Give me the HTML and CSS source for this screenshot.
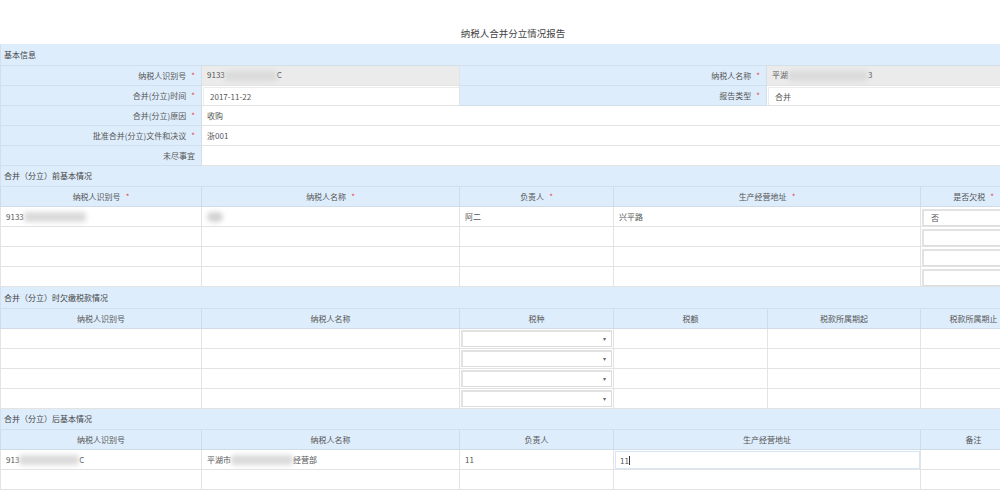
FILE: index.html
```html
<!doctype html>
<html lang="zh-CN">
  <head>
    <meta charset="UTF-8" />
    <title>纳税人合并分立情况报告</title>
    <link rel="stylesheet" href="styles.css">
  </head>
  <body>
    <div class="page">
      <h2 class="title">纳税人合并分立情况报告</h2>

      <!-- 基本信息 -->
      <table class="grid">
        <colgroup>
          <col style="width:201px"><col style="width:258px"><col style="width:307px"><col style="width:260px">
        </colgroup>
        <tr class="sec"><td colspan="4">基本信息</td></tr>
        <tr>
          <td class="lbl">纳税人识别号<i>*</i></td>
          <td class="val disabled">9133<span class="blur" style="width:52px"></span>C</td>
          <td class="lbl">纳税人名称<i>*</i></td>
          <td class="val disabled">平湖<span class="blur" style="width:80px"></span>3</td>
        </tr>
        <tr>
          <td class="lbl">合并(分立)时间<i>*</i></td>
          <td class="val"><div class="box">2017-11-22</div></td>
          <td class="lbl">报告类型<i>*</i></td>
          <td class="val"><div class="box">合并</div></td>
        </tr>
        <tr>
          <td class="lbl">合并(分立)原因<i>*</i></td>
          <td class="val" colspan="3">收购</td>
        </tr>
        <tr>
          <td class="lbl">批准合并(分立)文件和决议<i>*</i></td>
          <td class="val" colspan="3">浙001</td>
        </tr>
        <tr>
          <td class="lbl">未尽事宜</td>
          <td class="val" colspan="3"></td>
        </tr>
      </table>

      <!-- 合并（分立）前基本情况 -->
      <table class="grid">
        <colgroup>
          <col style="width:201px"><col style="width:258px"><col style="width:154px"><col style="width:307px"><col style="width:106px">
        </colgroup>
        <tr class="sec"><td colspan="5">合并（分立）前基本情况</td></tr>
        <tr class="head">
          <td>纳税人识别号<i>*</i></td>
          <td>纳税人名称<i>*</i></td>
          <td>负责人<i>*</i></td>
          <td>生产经营地址<i>*</i></td>
          <td>是否欠税<i>*</i></td>
        </tr>
        <tr>
          <td class="val">9133<span class="blur" style="width:62px"></span></td>
          <td class="val"><span class="blur round" style="width:16px"></span></td>
          <td class="val">阿二</td>
          <td class="val">兴平路</td>
          <td class="val"><div class="inp">否</div></td>
        </tr>
        <tr><td></td><td></td><td></td><td></td><td><div class="inp"></div></td></tr>
        <tr><td></td><td></td><td></td><td></td><td><div class="inp"></div></td></tr>
        <tr><td></td><td></td><td></td><td></td><td><div class="inp"></div></td></tr>
      </table>

      <!-- 合并（分立）时欠缴税款情况 -->
      <table class="grid">
        <colgroup>
          <col style="width:201px"><col style="width:258px"><col style="width:154px"><col style="width:154px"><col style="width:153px"><col style="width:106px">
        </colgroup>
        <tr class="sec"><td colspan="6">合并（分立）时欠缴税款情况</td></tr>
        <tr class="head">
          <td>纳税人识别号</td>
          <td>纳税人名称</td>
          <td>税种</td>
          <td>税额</td>
          <td>税款所属期起</td>
          <td>税款所属期止</td>
        </tr>
        <tr><td></td><td></td><td><div class="inp sel"></div></td><td></td><td></td><td></td></tr>
        <tr><td></td><td></td><td><div class="inp sel"></div></td><td></td><td></td><td></td></tr>
        <tr><td></td><td></td><td><div class="inp sel"></div></td><td></td><td></td><td></td></tr>
        <tr><td></td><td></td><td><div class="inp sel"></div></td><td></td><td></td><td></td></tr>
      </table>

      <!-- 合并（分立）后基本情况 -->
      <table class="grid">
        <colgroup>
          <col style="width:201px"><col style="width:258px"><col style="width:154px"><col style="width:307px"><col style="width:106px">
        </colgroup>
        <tr class="sec"><td colspan="5">合并（分立）后基本情况</td></tr>
        <tr class="head">
          <td>纳税人识别号</td>
          <td>纳税人名称</td>
          <td>负责人</td>
          <td>生产经营地址</td>
          <td>备注</td>
        </tr>
        <tr>
          <td class="val">913<span class="blur" style="width:60px"></span>C</td>
          <td class="val">平湖市<span class="blur" style="width:62px"></span>经营部</td>
          <td class="val">11</td>
          <td class="val"><div class="box focus">11<span class="caret"></span></div></td>
          <td class="val"></td>
        </tr>
        <tr><td></td><td></td><td></td><td></td><td></td></tr>
      </table>
    </div>
  </body>
</html>
```

FILE: styles.css
```css
html,
body {
  margin: 0;
  background: #fff;
  overflow: hidden;
}
body {
  font-family: "Noto Sans CJK SC", "Microsoft YaHei", sans-serif;
  color: #555;
  font-size: 8px;
}
.page {
  width: 1026px;
}
.title {
  margin: 0;
  height: 44px;
  line-height: 66px;
  text-align: center;
  font-size: 9.5px;
  font-weight: normal;
  color: #444;
  padding-left: 26px;
  box-sizing: border-box;
  width: 1000px;
}
.grid {
  width: 1026px;
  table-layout: fixed;
  border-collapse: collapse;
}
.grid td {
  height: 20px;
  padding: 0 5px;
  border: 1px solid #e3e3e3;
  white-space: nowrap;
  overflow: hidden;
  vertical-align: middle;
  box-sizing: border-box;
}
.grid tr:first-child td {
  border-top: none;
}
.grid i {
  font-style: normal;
  color: #e8474c;
  margin-left: 5px;
}
.sec td {
  background: #deedfc;
  border-color: #d3dfea;
  height: 21px;
  color: #444;
  padding-left: 3px;
}
.head td {
  background: #deedfc;
  border-color: #cfdbe7;
  text-align: center;
}
.lbl {
  background: #deedfc;
  text-align: right;
  border-color: #d3dfea !important;
  padding-right: 6px !important;
}
.val {
  color: #555;
}
.disabled {
  background: #ebebeb;
}
.grid td.val:has(.box) {
  padding: 1px 0 0 1px;
}
.box {
  height: 17px;
  line-height: 17px;
  padding: 0 6px;
  border: 1px solid #ececec;
  border-width: 1px 0 0 1px;
  background: #fff;
}
.focus {
  height: 16px;
  border: 1px solid #d6e6f6;
  padding-left: 4px;
}
.caret {
  display: inline-block;
  width: 1px;
  height: 9px;
  background: #333;
  vertical-align: -1px;
}
.grid td:has(.inp) {
  padding: 1px 0 0 1px;
}
.inp {
  height: 14px;
  line-height: 14px;
  border: 1px solid #dcdcdc;
  border-top: 2px solid #e2e2e2;
  border-left: 2px solid #e2e2e2;
  padding: 0 7px;
  background: #fff;
}
.sel {
  position: relative;
  margin-right: 1px;
}
.sel::after {
  content: "▾";
  position: absolute;
  right: 5px;
  top: 0;
  font-size: 6px;
  color: #666;
}
.blur {
  display: inline-block;
  height: 10px;
  background: #dadada;
  vertical-align: middle;
  filter: blur(2.5px);
  border-radius: 3px;
}
.round {
  border-radius: 6px;
  background: #d2d2d2;
}
```
